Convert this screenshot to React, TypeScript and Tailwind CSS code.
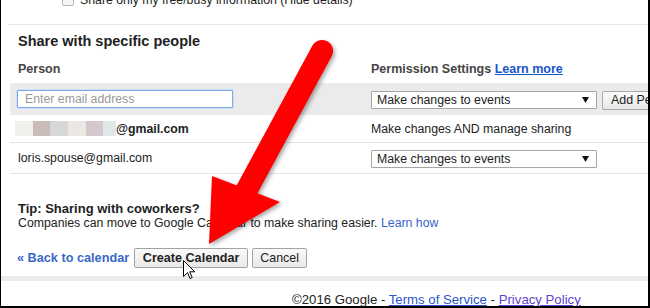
import React from "react";

function Select() {
  return (
    <div className="w-[226px] h-[18px] border border-[#a6a6a6] rounded-[1px] bg-white flex items-center justify-between pl-[5px] pr-[7px] text-[12.3px] leading-[14px] text-[#222]">
      <span>Make changes to events</span>
      <svg width="7" height="6" viewBox="0 0 7 6">
        <polygon points="0,0 7,0 3.5,6" fill="#111" />
      </svg>
    </div>
  );
}

const blocks = [
  ["w-[18px]", "bg-[#f0efe9]"],
  ["w-[17px]", "bg-[#c9bcb7]"],
  ["w-[18px]", "bg-[#d7d7d7]"],
  ["w-[18px]", "bg-[#ebe8e4]"],
  ["w-[17px]", "bg-[#d4c8cc]"],
  ["w-[13px]", "bg-[#e1e6e8]"],
];

export default function App() {
  return (
    <div className="relative w-[650px] h-[308px] overflow-hidden bg-white border-l border-r-2 border-b-2 border-black font-['Liberation_Sans',Arial,sans-serif] text-[#222]">
      {/* top checkbox row */}
      <div className="h-[24px] pl-[61px] flex items-start">
        <div className="-mt-[7px] h-[14px] flex items-center gap-[6px]">
          <span className="block w-[12px] h-[12px] border border-[#b5b5b5] rounded-[2px] bg-[#f5f5f5]" />
          <span className="text-[12.3px] leading-[14px] text-[#222] whitespace-nowrap">
            Share only my free/busy information (Hide details)
          </span>
        </div>
      </div>
      <div className="ml-[7px] h-px bg-[#e5e5e5]" />

      {/* heading */}
      <div className="pl-[17px] pt-[8px] text-[14.5px] leading-[17px] font-bold text-[#222]">
        Share with specific people
      </div>

      {/* table header */}
      <div className="mt-[12px] ml-[9px] grid grid-cols-[361px_1fr] text-[12.5px] leading-[15px] font-bold text-[#444]">
        <div className="pl-[8px]">Person</div>
        <div>
          Permission Settings{" "}
          <span className="text-[#1a55c8] underline">Learn more</span>
        </div>
      </div>

      {/* add row */}
      <div className="mt-[6px] ml-[9px] h-[32px] bg-[#ebebeb] grid grid-cols-[361px_1fr] items-center">
        <div className="pl-[7px]">
          <div className="w-[216px] h-[18px] border border-[#7fa6e6] shadow-[0_0_0_1px_#cfdff8] rounded-[1px] bg-white flex items-center pl-[7px] text-[12.3px] leading-[14px] text-[#9a9a9a]">
            Enter email address
          </div>
        </div>
        <div className="flex items-center gap-[5px] pt-[2px]">
          <Select />
          <div className="shrink-0 h-[19px] border border-[#a9a9a9] rounded-[2px] bg-gradient-to-b from-[#fbfbfb] to-[#e8e8e8] flex items-center pl-[8px] pr-[8px] text-[12.4px] leading-[14px] text-[#222] whitespace-nowrap">
            Add Person
          </div>
        </div>
      </div>

      {/* owner row */}
      <div className="ml-[9px] h-[28px] border-b border-[#e5e5e5] grid grid-cols-[361px_1fr] items-center text-[12.3px] leading-[14px]">
        <div className="pl-[5px] flex items-center">
          {blocks.map(([w, c], i) => (
            <span key={i} className={`block h-[15px] ${w} ${c}`} />
          ))}
          <span className="font-bold">@gmail.com</span>
        </div>
        <div>Make changes AND manage sharing</div>
      </div>

      {/* spouse row */}
      <div className="ml-[9px] h-[31px] border-b border-[#e5e5e5] grid grid-cols-[361px_1fr] items-center text-[12.3px] leading-[14px]">
        <div className="pl-[8px]">loris.spouse@gmail.com</div>
        <div className="pt-[1px]">
          <Select />
        </div>
      </div>

      {/* tip */}
      <div className="mt-[28px] pl-[17px] text-[13px] leading-[14px] font-bold text-[#222]">
        Tip: Sharing with coworkers?
      </div>
      <div className="pl-[17px] text-[12.3px] leading-[14px] text-[#222]">
        Companies can move to Google Calendar to make sharing easier.{" "}
        <span className="text-[#3b5fd0]">Learn how</span>
      </div>

      {/* buttons */}
      <div className="mt-[18px] h-[20px] pl-[16px] flex items-center">
        <span className="text-[12.7px] leading-[14px] font-bold text-[#3a68c8]">« Back to calendar</span>
        <div className="ml-[5px] h-[20px] w-[114px] border border-[#a3a3a3] rounded-[2px] bg-gradient-to-b from-[#fafafa] to-[#e9e9e9] flex items-center justify-center text-[12.6px] leading-[14px] font-bold text-[#222]">
          Create Calendar
        </div>
        <div className="ml-[4px] h-[20px] w-[55px] border border-[#a3a3a3] rounded-[2px] bg-gradient-to-b from-[#fafafa] to-[#e9e9e9] flex items-center justify-center text-[12.4px] leading-[14px] text-[#222]">
          Cancel
        </div>
      </div>

      {/* bottom band */}
      <div className="mt-[8px] h-[5px] bg-[#ebebeb]" />

      {/* footer */}
      <div className="mt-[11px] pl-[291px] text-[13.2px] leading-[15px] text-[#222] whitespace-nowrap">
        ©2016 Google - <span className="text-[#2a55cc] underline">Terms of Service</span> -{" "}
        <span className="text-[#5f3fd0] underline">Privacy Policy</span>
      </div>

      {/* red arrow */}
      <svg
        className="absolute left-0 top-0 pointer-events-none drop-shadow-[2px_2px_2px_rgba(0,0,0,0.35)]"
        width="650"
        height="308"
        viewBox="0 0 650 308"
      >
        <line x1="321" y1="51" x2="243" y2="195" stroke="#ff0000" strokeWidth="22" strokeLinecap="round" />
        <polygon points="211,176 279,202 208,244" fill="#ff0000" />
      </svg>

      {/* mouse cursor */}
      <svg className="absolute left-[182px] top-[260px]" width="13" height="20" viewBox="0 0 13 20">
        <path d="M0.5 0.5 L0.5 16.5 L4.5 12.7 L7 18.5 L9.2 17.6 L6.7 11.8 L11.8 11.8 Z" fill="#fff" stroke="#000" strokeWidth="1" strokeLinejoin="miter" />
      </svg>
    </div>
  );
}
